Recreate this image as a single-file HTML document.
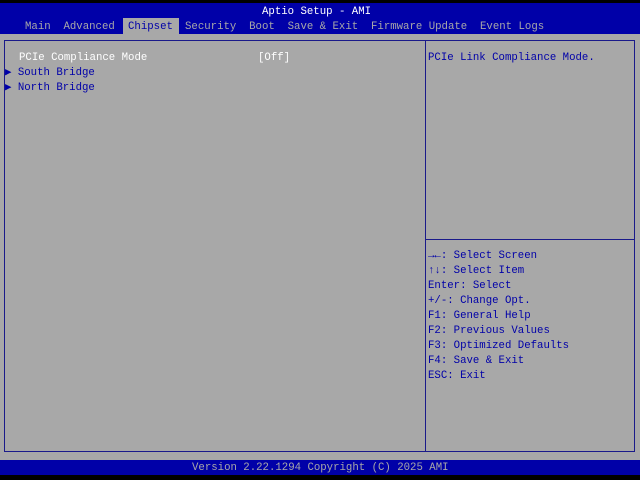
<!DOCTYPE html><html><head><style>
body{margin:0;width:640px;height:480px;background:#000;position:relative;overflow:hidden;font-family:"Liberation Mono",monospace;font-size:10.7px;}
.t{position:absolute;white-space:pre;line-height:15px}
</style></head><body>
<div style="position:absolute;left:0;top:3px;width:640px;height:31px;background:#0000a8"></div>
<div style="position:absolute;left:0;top:34px;width:640px;height:426px;background:#a8a8a8"></div>
<div style="position:absolute;left:4px;top:40px;width:629px;height:410px;border:1px solid #1a1a8a"></div>
<div style="position:absolute;left:425px;top:40px;width:1px;height:412px;background:#1a1a8a"></div>
<div style="position:absolute;left:426px;top:239px;width:208px;height:1px;background:#1a1a8a"></div>
<div style="position:absolute;left:123px;top:18px;width:56px;height:16px;background:#a8a8a8"></div>
<div style="position:absolute;left:0;top:460px;width:640px;height:15px;background:#0000a8"></div>
<div class="t" style="left:262px;top:5px;color:#fff">Aptio Setup - AMI</div>
<div class="t" style="left:25px;top:20px;color:#a8a8a8">Main  Advanced</div>
<div class="t" style="left:128px;top:20px;color:#0000a8">Chipset</div>
<div class="t" style="left:185px;top:20px;color:#a8a8a8">Security  Boot  Save &amp; Exit  Firmware Update  Event Logs</div>
<div class="t" style="left:19px;top:51px;color:#fff">PCIe Compliance Mode</div>
<div class="t" style="left:258px;top:51px;color:#fff">[Off]</div>
<div class="t" style="left:5px;top:66px;color:#0000a8">▶ South Bridge
▶ North Bridge</div>
<div class="t" style="left:428px;top:51px;color:#0000a8">PCIe Link Compliance Mode.</div>
<div class="t" style="left:428px;top:249px;color:#0000a8">→←: Select Screen
↑↓: Select Item
Enter: Select
+/-: Change Opt.
F1: General Help
F2: Previous Values
F3: Optimized Defaults
F4: Save &amp; Exit
ESC: Exit</div>
<div class="t" style="left:192px;top:461px;color:#a8a8a8">Version 2.22.1294 Copyright (C) 2025 AMI</div>
</body></html>
